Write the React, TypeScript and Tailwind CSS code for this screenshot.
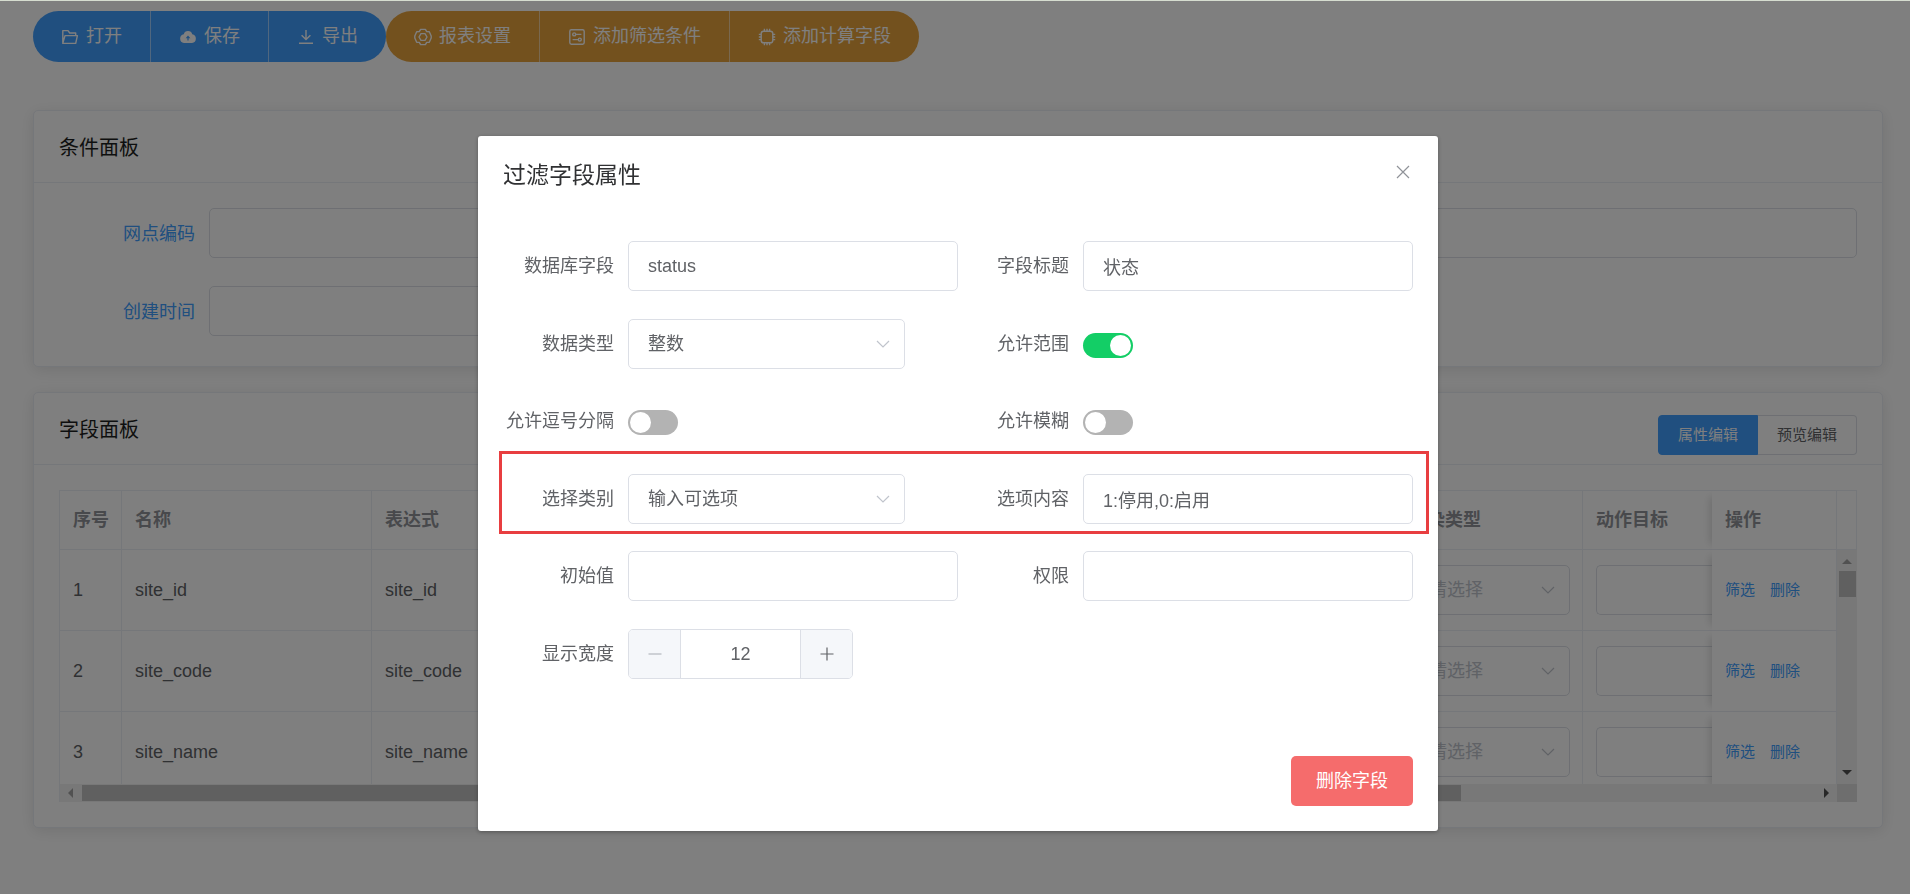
import { useState, type ReactNode } from "react";

const line = {
  fill: "none",
  stroke: "currentColor",
  strokeWidth: 1.2,
} as const;

function Icon({ children }: { children: ReactNode }) {
  return (
    <svg viewBox="0 0 18 18" className="size-[18px] shrink-0" aria-hidden="true" {...line} strokeWidth={1.4}>
      {children}
    </svg>
  );
}

const FolderIcon = () => (
  <Icon>
    <path d="M1.8 15.4V2.6H7L8.7 5h6v2.4M1.8 15.4 4 7.6h12.4l-1.7 7.8H1.8Z" strokeLinejoin="round" />
  </Icon>
);

const UploadIcon = () => (
  <Icon>
    <path
      d="M9 3a4.3 4.3 0 0 0-4.2 3.3A4.4 4.4 0 0 0 5 15h8a4.4 4.4 0 0 0 .2-8.7A4.3 4.3 0 0 0 9 3Zm.6 9.4H8.4v-2.2H6.6L9 7.6l2.4 2.6H9.6v2.2Z"
      fill="currentColor"
      fillRule="evenodd"
      stroke="none"
    />
  </Icon>
);

const DownloadIcon = () => (
  <Icon>
    <path d="M9 2v9.6M4.6 7.2 9 11.6l4.4-4.4M2 15.2h14" />
  </Icon>
);

const SettingIcon = () => (
  <Icon>
    <path
      d="M6.6 1.4h4.8l1.3 2.2 2.6.1L17.2 8v2l-1.9 4.300-2.600.1-1.300 2.200H6.600l-1.300-2.200-2.600-.1L.8 10V8l1.900-4.300 2.600-.1Z"
      strokeLinejoin="round"
    />
    <path d="M7 5.600h4L13 9l-2 3.400H7L5 9Z" strokeLinejoin="round" />
  </Icon>
);

const SetUpIcon = () => (
  <Icon>
    <rect x="1.8" y="1.8" width="14.4" height="14.4" rx="1.6" />
    <circle cx="6.2" cy="6.4" r="1.5" />
    <path d="M7.7 6.4h5.7M4.6 11.6h5.7" />
    <circle cx="11.8" cy="11.6" r="1.5" />
  </Icon>
);

const CpuIcon = () => (
  <Icon>
    <rect x="3.2" y="3.2" width="11.6" height="11.6" rx="2.4" />
    <path d="M6.4 3.2V.8M9 3.2V.8M11.6 3.2V.8M6.4 17.2v-2.4M9 17.2v-2.4M11.6 17.2v-2.4M3.2 6.4H.8M3.2 9H.8M3.2 11.6H.8M17.2 6.4h-2.4M17.2 9h-2.4M17.2 11.6h-2.4" />
  </Icon>
);

const Chevron = () => (
  <svg
    viewBox="0 0 14 14"
    className="pointer-events-none absolute top-[18px] right-[15px] size-[14px] text-[#c0c4cc]"
    aria-hidden="true"
    {...line}
  >
    <path d="M1 4l6 6 6-6" />
  </svg>
);

const inputClass =
  "block h-[50px] w-full rounded-[5px] border border-[#dcdfe6] bg-white px-[19px] text-[18px] text-[#606266] outline-none";

function ToolGroup({
  label,
  tone,
  items,
}: {
  label: string;
  tone: string;
  items: { icon: ReactNode; text: string }[];
}) {
  return (
    <div
      role="group"
      aria-label={label}
      className={`flex h-[51px] divide-x divide-white/50 overflow-hidden rounded-full text-white ${tone}`}
    >
      {items.map((item) => (
        <button key={item.text} type="button" className="flex items-center gap-[7px] px-[28px] text-[18px]">
          {item.icon}
          {item.text}
        </button>
      ))}
    </div>
  );
}

function Card({ title, extra, children }: { title: string; extra?: ReactNode; children: ReactNode }) {
  return (
    <section className="rounded-[5px] border border-[#ebeef5] bg-white shadow-[0_3px_15px_rgba(0,0,0,0.1)]">
      <header className="flex h-[72px] items-center justify-between border-b border-[#ebeef5] px-[25px]">
        <h2 className="pt-[2px] text-[20px] text-[#1d1e20]">{title}</h2>
        {extra}
      </header>
      {children}
    </section>
  );
}

function ConditionPanel() {
  return (
    <Card title="条件面板">
      <form className="grid gap-[28px] px-[25px] pt-[25px] pb-[30px]">
        <div className="flex items-center">
          <label htmlFor="cond-site" className="w-[150px] pt-[2px] pr-[14px] text-right text-[18px] text-[#409eff]">
            网点编码
          </label>
          <div className="flex-1">
            <input id="cond-site" className={inputClass} />
          </div>
        </div>
        <div className="flex items-center">
          <label htmlFor="cond-time" className="w-[150px] pt-[2px] pr-[14px] text-right text-[18px] text-[#409eff]">
            创建时间
          </label>
          <div className="w-2/5">
            <input id="cond-time" className={inputClass} />
          </div>
        </div>
      </form>
    </Card>
  );
}

const rows = ["site_id", "site_code", "site_name"];
const cell = "border-r border-b border-[#ebeef5] pr-[12px] pl-[13px]";
const fixedCell =
  "relative bg-white shadow-[-8px_0_8px_-6px_rgba(0,0,0,0.14),8px_0_8px_-6px_rgba(0,0,0,0.14)]";

function FieldTable() {
  return (
    <div className="border-t border-l border-[#ebeef5]">
      <div className="flex h-[293px]">
        <div className="min-w-0 flex-1 overflow-hidden">
          <table className="w-full table-fixed border-separate border-spacing-0 text-left text-[18px] text-[#606266]">
            <colgroup>
              <col className="w-[62px]" />
              <col className="w-[250px]" />
              <col className="w-[250px]" />
              <col />
              <col className="w-[187px]" />
              <col className="w-[129px]" />
              <col className="w-[125px]" />
            </colgroup>
            <thead>
              <tr className="h-[59px] whitespace-nowrap text-[#909399]">
                <th className={cell}>序号</th>
                <th className={cell}>名称</th>
                <th className={cell}>表达式</th>
                <td className={cell} />
                <th className={cell}>渲染类型</th>
                <th className="overflow-hidden border-b border-[#ebeef5] px-[13px]">动作目标</th>
                <th className={`${fixedCell} ${cell}`}>操作</th>
              </tr>
            </thead>
            <tbody>
              {rows.map((name, i) => (
                <tr key={name} className="h-[81px]">
                  <td className={cell}>{i + 1}</td>
                  <td className={cell}>{name}</td>
                  <td className={cell}>{name}</td>
                  <td className={cell} />
                  <td className={cell}>
                    <div className="relative">
                      <select aria-label={`${name} 渲染类型`} className={`appearance-none !text-[#c0c4cc] ${inputClass}`}>
                        <option>请选择</option>
                      </select>
                      <Chevron />
                    </div>
                  </td>
                  <td className="overflow-hidden border-b border-[#ebeef5] pl-[13px]">
                    <input
                      aria-label={`${name} 动作目标`}
                      className="block h-[50px] w-full rounded-l-[5px] border border-r-0 border-[#dcdfe6] px-[19px]"
                    />
                  </td>
                  <td className={`text-[15px] ${fixedCell} ${cell}`}>
                    <div className="flex gap-[15px] text-[#409eff]">
                      <button type="button">筛选</button>
                      <button type="button">删除</button>
                    </div>
                  </td>
                </tr>
              ))}
            </tbody>
          </table>
        </div>
        <div className="flex w-[20px] flex-col" aria-hidden="true">
          <div className="h-[59px] border-r border-b border-[#ebeef5]" />
          <div className="flex flex-1 flex-col items-center bg-[#f1f1f1] py-[9px]">
            <div className="border-x-[5px] border-b-[5px] border-x-transparent border-b-[#a3a3a3]" />
            <div className="mt-[7px] h-[26px] w-[17px] bg-[#c1c1c1]" />
            <div className="mt-auto border-x-[5px] border-t-[5px] border-x-transparent border-t-[#505050]" />
          </div>
        </div>
      </div>
      <div className="flex h-[18px]" aria-hidden="true">
        <div className="flex flex-1 items-center bg-[#f1f1f1] px-[8px]">
          <div className="border-y-[5px] border-r-[5px] border-y-transparent border-r-[#a3a3a3]" />
          <div className="ml-[9px] h-[16px] w-[calc(78%+5px)] bg-[#c1c1c1]" />
          <div className="ml-auto border-y-[5px] border-l-[5px] border-y-transparent border-l-[#505050]" />
        </div>
        <div className="w-[20px] bg-[#dcdcdc]" />
      </div>
    </div>
  );
}

function FieldPanel() {
  return (
    <Card
      title="字段面板"
      extra={
        <div role="group" aria-label="编辑模式" className="mb-[9px] flex h-[40px] self-end text-[15px]">
          <button type="button" className="rounded-l-[4px] border border-[#409eff] bg-[#409eff] px-[19px] text-white">
            属性编辑
          </button>
          <button type="button" className="rounded-r-[4px] border border-l-0 border-[#dcdfe6] bg-white px-[19px] text-[#606266]">
            预览编辑
          </button>
        </div>
      }
    >
      <div className="p-[25px]">
        <FieldTable />
      </div>
    </Card>
  );
}

function Field({ id, label, children }: { id: string; label: string; children: ReactNode }) {
  return (
    <div className="flex">
      <label htmlFor={id} className="w-[125px] shrink-0 pr-[14px] text-right text-[18px] leading-[50px] text-[#606266]">
        {label}
      </label>
      <div className="min-w-0 flex-1">{children}</div>
    </div>
  );
}

function TextField({ id, label, value = "" }: { id: string; label: string; value?: string }) {
  return (
    <Field id={id} label={label}>
      <input id={id} defaultValue={value} className={inputClass} />
    </Field>
  );
}

function SelectField({ id, label, value }: { id: string; label: string; value: string }) {
  return (
    <Field id={id} label={label}>
      <div className="relative w-[84%]">
        <select id={id} className={`appearance-none ${inputClass}`}>
          <option>{value}</option>
        </select>
        <Chevron />
      </div>
    </Field>
  );
}

function SwitchField({ id, label, on = false }: { id: string; label: string; on?: boolean }) {
  return (
    <Field id={id} label={label}>
      <input
        id={id}
        type="checkbox"
        role="switch"
        defaultChecked={on}
        className="mt-[14px] flex h-[25px] w-[50px] appearance-none items-center rounded-full bg-[#b3b3b3] px-[2px] before:size-[21px] before:rounded-full before:bg-white checked:justify-end checked:bg-[#13ce66]"
      />
    </Field>
  );
}

function WidthField() {
  const [width, setWidth] = useState(12);
  return (
    <Field id="width" label="显示宽度">
      <div className="flex h-[50px] w-[225px] overflow-hidden rounded-[5px] border border-[#dcdfe6]">
        <button
          type="button"
          aria-label="减少"
          onClick={() => setWidth(width - 1)}
          className="flex w-[52px] items-center justify-center border-r border-[#dcdfe6] bg-[#f5f7fa] text-[#a8abb2]"
        >
          <svg viewBox="0 0 14 14" className="size-[14px]" aria-hidden="true" {...line}>
            <path d="M0.5 7h13" />
          </svg>
        </button>
        <input
          id="width"
          value={width}
          onChange={(e) => setWidth(Number(e.target.value) || 0)}
          className="min-w-0 flex-1 text-center text-[18px] text-[#606266] outline-none"
        />
        <button
          type="button"
          aria-label="增加"
          onClick={() => setWidth(width + 1)}
          className="flex w-[52px] items-center justify-center border-l border-[#dcdfe6] bg-[#f5f7fa] text-[#606266]"
        >
          <svg viewBox="0 0 14 14" className="size-[14px]" aria-hidden="true" {...line}>
            <path d="M0.5 7h13M7 .5v13" />
          </svg>
        </button>
      </div>
    </Field>
  );
}

function FilterDialog() {
  return (
    <div className="fixed inset-0 flex items-start justify-center overflow-hidden border-t border-[#d6ddd0] bg-black/50 pt-[135px] pl-[6px]">
      <div
        role="dialog"
        aria-modal="true"
        aria-labelledby="dialog-title"
        className="w-[960px] max-w-full rounded-[3px] bg-white p-[25px] shadow-[0_1px_4px_rgba(0,0,0,0.3)]"
      >
        <header className="flex h-[30px] items-start justify-between">
          <h1 id="dialog-title" className="text-[23px] leading-[28px] text-[#303133]">
            过滤字段属性
          </h1>
          <button type="button" aria-label="关闭" className="flex h-[22px] w-[20px] items-center justify-center text-[#909399]">
            <svg viewBox="0 0 14 14" className="size-[14px]" aria-hidden="true" {...line}>
              <path d="M1 1l12 12M13 1 1 13" />
            </svg>
          </button>
        </header>
        <form className="grid gap-[28px] pt-[50px] pb-[77px]">
          <div className="grid grid-cols-2">
            <TextField id="column" label="数据库字段" value="status" />
            <TextField id="title" label="字段标题" value="状态" />
          </div>
          <div className="grid grid-cols-2">
            <SelectField id="type" label="数据类型" value="整数" />
            <SwitchField id="range" label="允许范围" on />
          </div>
          <div className="-mt-px grid grid-cols-2">
            <SwitchField id="comma" label="允许逗号分隔" />
            <SwitchField id="fuzzy" label="允许模糊" />
          </div>
          <div className="relative grid grid-cols-2">
            <SelectField id="kind" label="选择类别" value="输入可选项" />
            <TextField id="options" label="选项内容" value="1:停用,0:启用" />
            <div
              aria-hidden="true"
              className="pointer-events-none absolute -top-[23px] -right-[16px] -bottom-[10px] -left-[4px] border-[3px] border-[#e83e40]"
            />
          </div>
          <div className="-mt-px grid grid-cols-2">
            <TextField id="initial" label="初始值" />
            <TextField id="permission" label="权限" />
          </div>
          <div className="grid grid-cols-2">
            <WidthField />
          </div>
        </form>
        <footer className="flex justify-end">
          <button type="button" className="h-[50px] rounded-[5px] bg-[#f56c6c] px-[25px] text-[18px] text-white">
            删除字段
          </button>
        </footer>
      </div>
    </div>
  );
}

export default function App() {
  return (
    <div className="min-h-screen bg-white font-['Liberation_Sans','Noto_Sans_CJK_SC',sans-serif]">
      <main className="pt-[11px] pr-[27px] pb-[40px] pl-[33px]">
        <div className="flex">
          <ToolGroup
            label="文件"
            tone="bg-[#409eff]"
            items={[
              { icon: <FolderIcon />, text: "打开" },
              { icon: <UploadIcon />, text: "保存" },
              { icon: <DownloadIcon />, text: "导出" },
            ]}
          />
          <ToolGroup
            label="报表"
            tone="bg-[#e6a23c]"
            items={[
              { icon: <SettingIcon />, text: "报表设置" },
              { icon: <SetUpIcon />, text: "添加筛选条件" },
              { icon: <CpuIcon />, text: "添加计算字段" },
            ]}
          />
        </div>
        <div className="mt-[48px] grid gap-[25px]">
          <ConditionPanel />
          <FieldPanel />
        </div>
      </main>
      <FilterDialog />
    </div>
  );
}
